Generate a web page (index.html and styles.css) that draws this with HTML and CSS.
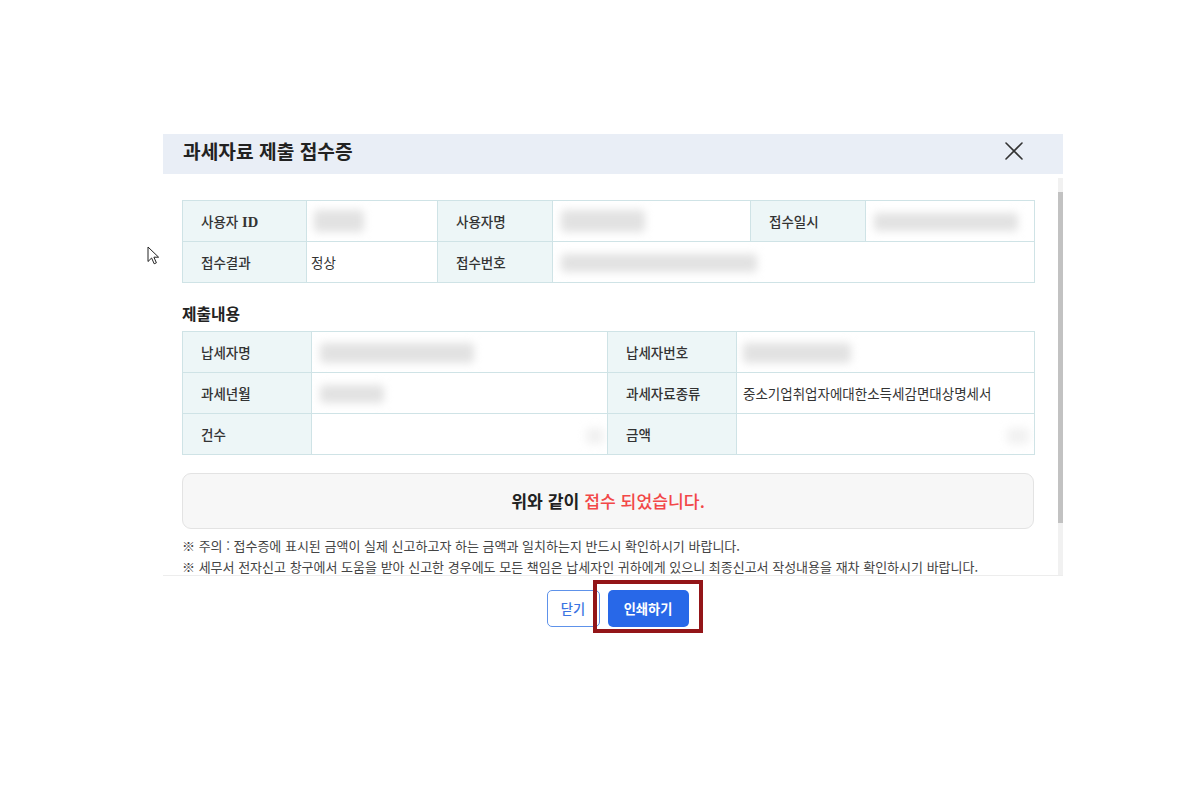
FILE: index.html
```html
<!DOCTYPE html>
<html lang="ko">
<head>
<meta charset="utf-8">
<title>과세자료 제출 접수증</title>
<link rel="stylesheet" href="styles.css">
</head>
<body>
<div class="page">
  <div class="modal">
    <div class="modal-header">
      <h1 class="modal-title">과세자료 제출 접수증</h1>
      <button class="close-btn" type="button" aria-label="닫기">
        <svg viewBox="0 0 24 24" width="24" height="24"><path d="M4 4 L20 20 M20 4 L4 20" stroke="#333" stroke-width="1.6" fill="none" stroke-linecap="round"/></svg>
      </button>
    </div>
    <div class="modal-body">
      <div class="content">
        <table class="info info-user">
          <colgroup><col class="c1-1"><col class="c1-2"><col class="c1-3"><col class="c1-4"><col class="c1-5"><col class="c1-6"></colgroup>
          <tr>
            <th>사용자 <span class="serif">ID</span></th>
            <td><span class="blur b-uid"></span></td>
            <th>사용자명</th>
            <td><span class="blur b-uname"></span></td>
            <th>접수일시</th>
            <td><span class="blur b-date"></span></td>
          </tr>
          <tr>
            <th>접수결과</th>
            <td>정상</td>
            <th>접수번호</th>
            <td colspan="3"><span class="blur b-recno"></span></td>
          </tr>
        </table>

        <h2 class="section-title">제출내용</h2>

        <table class="info info-submit">
          <colgroup><col class="c2-1"><col class="c2-2"><col class="c2-3"><col class="c2-4"></colgroup>
          <tr>
            <th>납세자명</th>
            <td><span class="blur b-payer"></span></td>
            <th>납세자번호</th>
            <td><span class="blur b-payno"></span></td>
          </tr>
          <tr>
            <th>과세년월</th>
            <td><span class="blur b-ym"></span></td>
            <th>과세자료종류</th>
            <td>중소기업취업자에대한소득세감면대상명세서</td>
          </tr>
          <tr>
            <th>건수</th>
            <td class="num"><span class="blur faint b-count"></span></td>
            <th>금액</th>
            <td class="num"><span class="blur faint b-amt"></span></td>
          </tr>
        </table>

        <div class="result">위와 같이 <span class="accent">접수 되었습니다.</span></div>

        <ul class="notes">
          <li>※ 주의 : 접수증에 표시된 금액이 실제 신고하고자 하는 금액과 일치하는지 반드시 확인하시기 바랍니다.</li>
          <li>※ 세무서 전자신고 창구에서 도움을 받아 신고한 경우에도 모든 책임은 납세자인 귀하에게 있으니 최종신고서 작성내용을 재차 확인하시기 바랍니다.</li>
        </ul>
      </div>
      <div class="scrollbar">
        <div class="scroll-top"></div>
        <div class="scroll-thumb"></div>
        <div class="scroll-track"></div>
      </div>
    </div>
    <div class="modal-footer">
      <button class="btn btn-outline" type="button">닫기</button>
      <span class="highlight-wrap">
        <button class="btn btn-primary" type="button">인쇄하기</button>
        <span class="highlight"></span>
      </span>
    </div>
  </div>
  <svg class="cursor" viewBox="0 0 13 19" width="13" height="19"><path d="M1 1 L1 15.5 L4.6 12 L7.2 17.8 L9.4 16.8 L6.9 11.2 L11.6 11.2 Z" fill="#fff" stroke="#222" stroke-width="1" stroke-linejoin="miter"/></svg>
</div>
</body>
</html>
```

FILE: styles.css
```css
* { box-sizing: border-box; }

html, body {
  margin: 0;
  padding: 0;
  background: #ffffff;
}

body {
  width: 1200px;
  height: 800px;
  overflow: hidden;
  font-family: "Noto Sans CJK KR", "Noto Sans", sans-serif;
  color: #333;
}

.page {
  position: relative;
  width: 1200px;
  height: 800px;
  padding: 134px 0 0 163px;
}

.modal {
  width: 900px;
  background: #fff;
}

/* header */
.modal-header {
  height: 40px;
  background: #e9eef6;
  display: flex;
  align-items: center;
  justify-content: space-between;
  padding: 0 37px 6px 20px;
}

.modal-title {
  margin: 0;
  font-size: 19.2px;
  font-weight: 700;
  color: #222;
  line-height: 24px;
}

.close-btn {
  width: 24px;
  height: 24px;
  padding: 0;
  border: 0;
  background: transparent;
  display: flex;
}

/* body */
.modal-body {
  height: 401px;
  display: flex;
  overflow: hidden;
}

.content {
  flex: 1;
  padding: 26px 24px 0 19px;
  overflow: hidden;
}

.scrollbar {
  width: 5px;
  display: flex;
  flex-direction: column;
  padding-top: 4px;
}

.scroll-top {
  height: 14px;
  background: #f1f1f1;
}

.scroll-thumb {
  height: 331px;
  background: #c2c2c2;
}

.scroll-track {
  flex: 1;
  background: #f1f1f1;
}

/* tables */
.info {
  width: 852px;
  border-collapse: collapse;
  table-layout: fixed;
  font-size: 13.5px;
}

.info th,
.info td {
  height: 41px;
  border: 1px solid #cfe3e6;
  vertical-align: middle;
  line-height: 18px;
  white-space: nowrap;
  overflow: hidden;
}

.info th {
  background: #edf6f7;
  font-weight: 500;
  text-align: left;
  padding: 0 0 0 18px;
  color: #333;
}

.info td {
  background: #fff;
  padding: 0 4px;
  color: #333;
}

.info-submit td { padding: 0 6px; }
.info td.num { text-align: right; padding-right: 3px; }

.serif { font-family: "Liberation Serif", serif; font-size: 14.5px; font-weight: 700; }

.c1-1 { width: 124px; }
.c1-2 { width: 131px; }
.c1-3 { width: 115px; }
.c1-4 { width: 198px; }
.c1-5 { width: 115px; }
.c1-6 { width: 169px; }

.c2-1 { width: 129px; }
.c2-2 { width: 296px; }
.c2-3 { width: 129px; }
.c2-4 { width: 298px; }

/* blurred values */
.blur {
  display: inline-block;
  vertical-align: middle;
  background: #e2e2e2;
  border-radius: 4px;
  filter: blur(4px);
}

.blur.faint { background: #f1f1f1; }

.b-uid   { width: 50px;  height: 22px; margin-left: 3px; }
.b-uname { width: 84px;  height: 22px; margin-left: 4px; }
.b-date  { width: 144px; height: 18px; margin-left: 4px; }
.b-recno { width: 196px; height: 18px; margin-left: 4px; }
.b-payer { width: 154px; height: 20px; margin-left: 2px; }
.b-ym    { width: 64px;  height: 18px; margin-left: 2px; }
.b-payno { width: 108px; height: 20px; margin-left: 0; }
.b-count { width: 18px;  height: 16px; }
.b-amt   { width: 22px;  height: 16px; margin-right: 2px; }

.section-title {
  margin: 21px 0 7px;
  font-size: 15.8px;
  font-weight: 700;
  line-height: 20px;
  color: #222;
}

/* result */
.result {
  margin-top: 18px;
  height: 56px;
  border: 1px solid #e3e3e3;
  border-radius: 9px;
  background: #f7f7f7;
  display: flex;
  align-items: center;
  justify-content: center;
  font-size: 17.2px;
  font-weight: 700;
  color: #222;
  padding-bottom: 2px;
  white-space: pre;
}

.accent {
  color: #f24848;
  font-weight: 500;
}

.notes {
  list-style: none;
  margin: 9px 0 0;
  padding: 0;
  font-size: 13px;
  line-height: 16px;
  color: #444;
  white-space: nowrap;
}

.notes li + li { margin-top: 5px; }

/* footer */
.modal-footer {
  border-top: 1px solid #ededed;
  padding: 14px 0 20px 9px;
  display: flex;
  justify-content: center;
  gap: 8px;
}

.btn {
  height: 37px;
  border-radius: 5px;
  font-family: "Noto Sans CJK KR", "Noto Sans", sans-serif;
  font-size: 13.2px;
  font-weight: 700;
  padding: 0;
  cursor: pointer;
}

.btn-outline {
  width: 53px;
  background: #fff;
  border: 1px solid #5e92ea;
  color: #3a74e2;
  font-weight: 500;
}

.btn-primary {
  width: 81px;
  background: #2868e8;
  border: 0;
  color: #fff;
}

.highlight-wrap {
  position: relative;
  display: inline-flex;
}

.highlight {
  position: absolute;
  left: -15px;
  top: -10px;
  width: 110px;
  height: 53px;
  border: 4px solid #931518;
  pointer-events: none;
}

.cursor {
  position: absolute;
  left: 147px;
  top: 246px;
}
```
